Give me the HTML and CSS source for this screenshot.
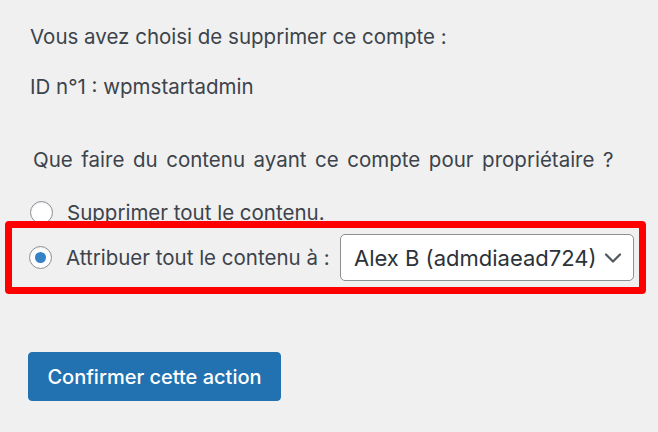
FILE: index.html
```html
<!DOCTYPE html>
<html lang="fr">
<head>
<meta charset="utf-8">
<title>Supprimer le compte</title>
<link rel="stylesheet" href="styles.css">
</head>
<body>
<div class="page">
  <p class="msg">Vous avez choisi de supprimer ce compte :</p>
  <p class="msg">ID n°1 : wpmstartadmin</p>
  <div class="options">
    <p class="legend">Que faire du contenu ayant ce compte pour propriétaire ?</p>
    <label class="opt opt-delete"><span class="radio"></span><span class="opt-text">Supprimer tout le contenu.</span></label>
    <div class="highlight">
      <label class="opt"><span class="radio checked"></span><span class="opt-text">Attribuer tout le contenu à :</span></label>
      <div class="select">
        <span class="select-value">Alex B (admdiaead724)</span>
        <svg class="chevron" width="20" height="12" viewBox="0 0 20 12"><path d="M3 2.5 L10 9.5 L17 2.5" fill="none" stroke="#50575e" stroke-width="2.2" stroke-linecap="round" stroke-linejoin="round"/></svg>
      </div>
    </div>
  </div>
  <div class="submit">
    <button class="btn-primary" type="button">Confirmer cette action</button>
  </div>
</div>
</body>
</html>
```

FILE: styles.css
```css
html, body {
  margin: 0;
  padding: 0;
  background: #f0f0f1;
}
body {
  font-family: Inter, "Noto Sans", "Liberation Sans", sans-serif;
  font-size: 20.5px;
  color: #3c434a;
  width: 658px;
  height: 432px;
  overflow: hidden;
}
.page {
  padding: 26px 0 0 30px;
  display: flex;
  flex-direction: column;
}
.msg {
  margin: 0 0 28px 0;
  line-height: 22px;
}
.options {
  display: flex;
  flex-direction: column;
  margin-top: 23px;
}
.legend {
  margin: 0 0 0 3px;
  line-height: 22px;
  word-spacing: 2.8px;
}
.opt {
  display: flex;
  align-items: center;
  gap: 14px;
}
.opt-delete {
  margin-top: 29px;
  height: 24px;
}
.radio {
  width: 23px;
  height: 23px;
  border: 1px solid #8c8f94;
  border-radius: 50%;
  background: #fff;
  box-sizing: border-box;
  display: flex;
  align-items: center;
  justify-content: center;
  flex: none;
  box-shadow: inset 0 1px 2px rgba(0,0,0,0.08);
}
.radio.checked::before {
  content: "";
  width: 11px;
  height: 11px;
  border-radius: 50%;
  background: #3582c4;
}
.highlight {
  display: flex;
  align-items: center;
  margin: -3px 0 0 -25px;
  width: 641px;
  box-sizing: border-box;
  border: 7px solid #ff0000;
  border-radius: 4px;
  padding: 6px 5px 6px 17px;
  justify-content: space-between;
}
.select {
  width: 294px;
  height: 47px;
  box-sizing: border-box;
  border: 1px solid #8c8f94;
  border-radius: 5px;
  background: #fff;
  display: flex;
  align-items: center;
  justify-content: space-between;
  padding: 0 10px 0 13px;
  font-size: 22px;
  color: #2c3338;
}
.chevron {
  display: block;
}
.submit {
  margin-top: 58px;
  display: flex;
}
.btn-primary {
  margin-left: -2px;
  width: 253px;
  height: 49px;
  background: #2271b1;
  border: 1px solid #2271b1;
  border-radius: 4px;
  color: #fff;
  font-family: inherit;
  font-size: 20px;
  font-weight: 500;
  padding: 0;
}
```
